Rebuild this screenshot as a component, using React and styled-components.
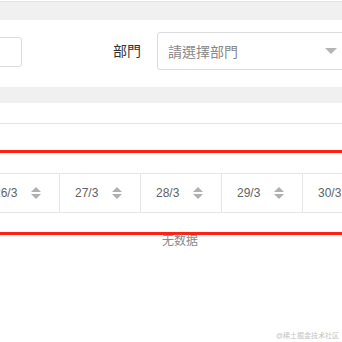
import React from 'react'
import styled, { createGlobalStyle } from 'styled-components'

const GlobalStyle = createGlobalStyle`
  html, body {
    margin: 0;
    padding: 0;
    background: #fff;
    overflow: hidden;
  }
  body {
    font-family: "Liberation Sans", "Noto Sans CJK TC", "Noto Sans CJK SC", sans-serif;
  }
`

const days = ['26/3', '27/3', '28/3', '29/3', '30/3', '31/3', '1/4']

const App = () => {
  return (
    <Page>
      <GlobalStyle />
      <TopBand />
      <FilterRow>
        <TextInput />
        <Label>部門</Label>
        <Select>
          <Placeholder>請選擇部門</Placeholder>
          <Arrow />
        </Select>
      </FilterRow>
      <GrayBand />
      <Divider />
      <RedLine $gap={26} />
      <HeaderRow>
        {days.map((day) => (
          <HeaderCell key={day}>
            <CellText>{day}</CellText>
            <SortCaret>
              <CaretUp />
              <CaretDown />
            </SortCaret>
          </HeaderCell>
        ))}
      </HeaderRow>
      <RedLine $gap={19} />
      <EmptyText>无数据</EmptyText>
      <Watermark>@稀土掘金技术社区</Watermark>
    </Page>
  )
}

export default App

const Page = styled.div`
  position: relative;
  width: 342px;
  height: 342px;
  overflow: hidden;
  background: #fff;
`

const TopBand = styled.div`
  margin-top: 1px;
  height: 18px;
  background: #f0f0f0;
  border-top: 1px solid #e3e3e3;
`

const FilterRow = styled.div`
  display: flex;
  align-items: flex-start;
  height: 67px;
  padding-top: 12px;
  box-sizing: border-box;
  margin-left: -100px;
`

const TextInput = styled.div`
  flex: none;
  width: 122px;
  height: 30px;
  margin-top: 5px;
  box-sizing: border-box;
  border: 1px solid #dcdcdc;
  border-radius: 3px;
`

const Label = styled.div`
  flex: none;
  margin-left: 91px;
  height: 38px;
  line-height: 38px;
  font-size: 14px;
  color: #333;
`

const Select = styled.div`
  flex: none;
  display: flex;
  align-items: center;
  justify-content: space-between;
  margin-left: 16px;
  width: 192px;
  height: 38px;
  padding: 0 11px 0 10px;
  box-sizing: border-box;
  border: 1px solid #dcdcdc;
  border-radius: 3px;
`

const Placeholder = styled.span`
  font-size: 14px;
  color: #888;
`

const Arrow = styled.span`
  width: 0;
  height: 0;
  border-left: 6px solid transparent;
  border-right: 6px solid transparent;
  border-top: 6px solid #b4b4b4;
`

const GrayBand = styled.div`
  height: 16px;
  background: #f0f0f0;
`

const Divider = styled.div`
  height: 20px;
  border-bottom: 1px solid #e6e6e6;
`

const RedLine = styled.div`
  margin-top: ${(props) => props.$gap}px;
  height: 3px;
  background: #ff2212;
`

const HeaderRow = styled.div`
  display: flex;
  margin-top: 20px;
  margin-left: -21px;
  height: 38px;
  border-top: 1px solid #e6e6e6;
  border-bottom: 1px solid #e6e6e6;
`

const HeaderCell = styled.div`
  flex: none;
  display: flex;
  align-items: center;
  width: 81px;
  padding-left: 15px;
  box-sizing: border-box;
  border-right: 1px solid #e6e6e6;
`

const CellText = styled.span`
  font-size: 12px;
  color: #606266;
`

const SortCaret = styled.span`
  display: flex;
  flex-direction: column;
  align-items: center;
  gap: 2px;
  margin-left: 14px;
`

const CaretUp = styled.span`
  width: 0;
  height: 0;
  border-left: 5px solid transparent;
  border-right: 5px solid transparent;
  border-bottom: 5px solid #b0b0b0;
`

const CaretDown = styled.span`
  width: 0;
  height: 0;
  border-left: 5px solid transparent;
  border-right: 5px solid transparent;
  border-top: 5px solid #b0b0b0;
`

const EmptyText = styled.div`
  padding-left: 18px;
  text-align: center;
  font-size: 12px;
  line-height: 13px;
  color: #8a8a8a;
`

const Watermark = styled.div`
  position: absolute;
  right: 3px;
  bottom: 2px;
  font-size: 7px;
  color: #c4c4c4;
`
